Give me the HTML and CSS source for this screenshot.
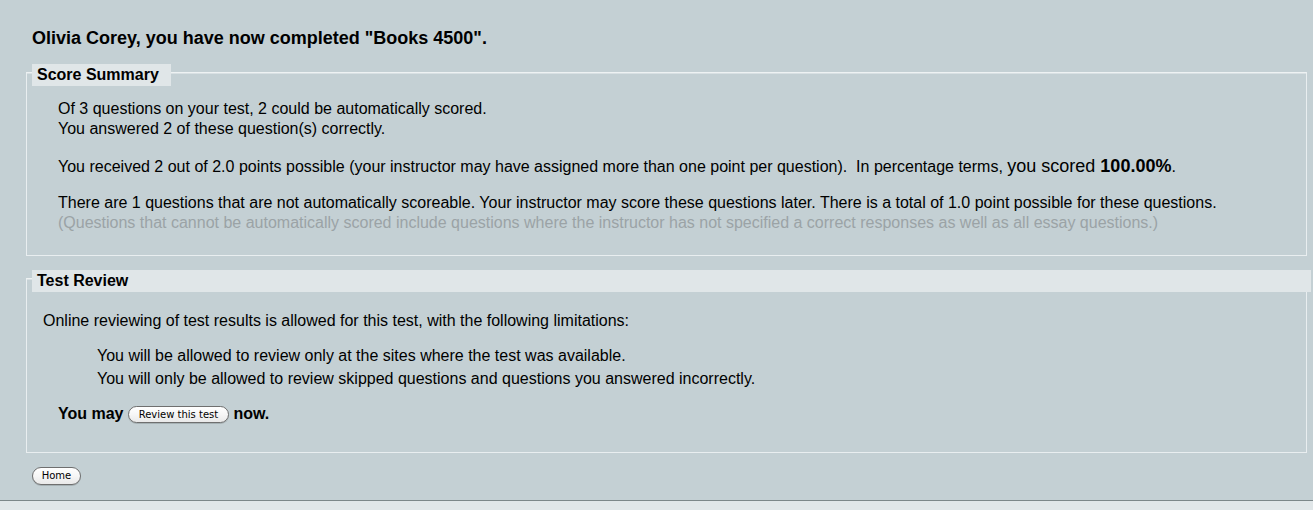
FILE: index.html
```html
<!DOCTYPE html>
<html>
<head>
<meta charset="utf-8">
<link rel="stylesheet" href="styles.css">
</head>
<body>
<div class="page">
  <h1 class="title">Olivia Corey, you have now completed "Books 4500".</h1>

  <fieldset class="box box-summary">
    <legend class="legend">Score Summary</legend>
    <div class="summary">
      <p class="para">Of 3 questions on your test, 2 could be automatically scored.<br>You answered 2 of these question(s) correctly.</p>
      <p class="para para-score">You received 2 out of 2.0 points possible (your instructor may have assigned more than one point per question).&nbsp; In percentage terms, <span class="big">you scored <b>100.00%</b></span>.</p>
      <p class="para para-more">There are 1 questions that are not automatically scoreable. Your instructor may score these questions later. There is a total of 1.0 point possible for these questions.<br><span class="muted">(Questions that cannot be automatically scored include questions where the instructor has not specified a correct responses as well as all essay questions.)</span></p>
    </div>
  </fieldset>

  <fieldset class="box box-review">
    <legend class="legend legend-wide">Test Review</legend>
    <div class="review">
      <p class="intro">Online reviewing of test results is allowed for this test, with the following limitations:</p>
      <ul class="limits">
        <li class="limit">You will be allowed to review only at the sites where the test was available.</li>
        <li class="limit">You will only be allowed to review skipped questions and questions you answered incorrectly.</li>
      </ul>
      <p class="may">You may <button class="btn btn-review" type="button">Review this test</button> now.</p>
    </div>
  </fieldset>

  <div class="actions"><button class="btn btn-home" type="button">Home</button></div>
</div>
<div class="footer"></div>
</body>
</html>
```

FILE: styles.css
```css
html, body {
  margin: 0;
  padding: 0;
  background: #c4d0d4;
  color: #000;
  font-family: "Liberation Sans", Arial, sans-serif;
  font-size: 16px;
  line-height: 20px;
}

body {
  height: 510px;
  overflow: hidden;
}

.page {
  padding: 28px 6px 0 26px;
  height: 500px;
  box-sizing: border-box;
}

.title {
  margin: 0 0 0 6px;
  font-size: 18px;
  font-weight: bold;
  line-height: 20px;
}

.box {
  margin: 0;
  padding: 0;
  min-width: 0;
  border: 1px solid #e9eef0;
  border-top-color: #eef2f3;
  box-shadow: inset 0 1px 0 rgba(255,255,255,0.35);
}

.box-summary {
  margin-top: 10px;
}

.box-review {
  margin-top: 8px;
}

.legend {
  margin-left: 5px;
  padding: 6px 12px 0 5px;
  height: 28px;
  box-sizing: border-box;
  font-size: 16px;
  font-weight: bold;
  line-height: 22px;
  background: linear-gradient(#e0e6e8, #e0e6e8) left bottom / 100% 22px no-repeat;
}

.legend-wide {
  width: 100%;
}

.summary {
  padding: 13px 20px 22px 31px;
}

.para {
  margin: 0;
}

.para-score {
  margin-top: 17px;
}

.para-more {
  margin-top: 16px;
}

.big {
  font-size: 18px;
  line-height: 20px;
}

.muted {
  color: #9ba3a6;
}

.review {
  padding: 19px 20px 28px 16px;
}

.intro {
  margin: 0;
}

.limits {
  list-style: none;
  margin: 15px 0 0 0;
  padding: 0 0 0 54px;
}

.limit {
  line-height: 20px;
  margin-bottom: 3px;
}

.may {
  margin: 15px 0 0 15px;
  font-size: 16px;
  font-weight: bold;
  line-height: 20px;
}

.btn {
  font-family: "DejaVu Sans", sans-serif;
  font-size: 10px;
  font-weight: normal;
  color: #000;
  background: linear-gradient(#ffffff, #f6f6f6 50%, #e9e9e9);
  border: 1px solid #6f6f6f;
  border-radius: 9px;
  padding: 0 8px;
  height: 17px;
  line-height: 15px;
  vertical-align: 1px;
  box-shadow: 0 1px 0 rgba(0,0,0,0.15);
}

.btn-review {
  width: 101px;
  padding: 0;
}

.btn-home {
  width: 49px;
  height: 18px;
  padding: 0;
}

.actions {
  margin: 12px 0 0 6px;
}

.footer {
  border-top: 1px solid #7c8789;
  background: #e0e6e8;
  height: 9px;
}
```
